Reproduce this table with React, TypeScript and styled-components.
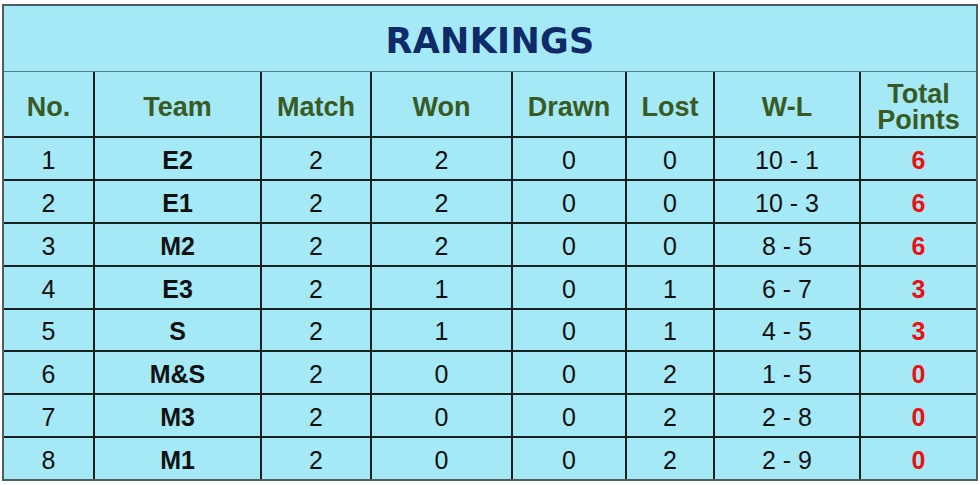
import React from "react";
import styled, { createGlobalStyle } from "styled-components";

const Global = createGlobalStyle`
  html, body { margin: 0; padding: 0; background: #ffffff; }
  body { font-family: "Liberation Sans", Arial, sans-serif; }
`;

const Frame = styled.div`
  margin: 4px 0 0 2px;
  width: 972px;
  border: 2px solid #4f5f61;
  background: #a4e9f5;
`;

const Title = styled.div`
  height: 66px;
  border-bottom: 1px solid #4d7f86;
  display: flex;
  align-items: center;
  justify-content: center;
  font-family: "DejaVu Sans", Verdana, sans-serif;
  font-weight: bold;
  font-size: 35px;
  letter-spacing: 0.3px;
  color: #0f2a68;
  padding-top: 4px;
  box-sizing: border-box;
`;

const Grid = styled.div`
  display: grid;
  grid-template-columns: 89px 167px 110px 141px 114px 88px 146px 117px;
  grid-template-rows: 64px repeat(8, 42.875px);
`;

const Cell = styled.div<{ $first?: boolean; $top?: boolean }>`
  box-sizing: border-box;
  display: flex;
  align-items: center;
  justify-content: center;
  text-align: center;
  border-left: ${(p) => (p.$first ? "none" : "2px solid #15201f")};
  border-top: ${(p) => (p.$top ? "none" : "2px solid #15201f")};
  font-size: 25px;
  color: #111111;
  padding-top: 4px;
`;

const HeadCell = styled(Cell)`
  font-size: 27px;
  font-weight: bold;
  line-height: 26px;
  color: #3a5a24;
  padding-top: 6px;
`;

const TotalLine = styled.span`
  display: block;
  line-height: 26px;
`;

const TeamCell = styled(Cell)`
  font-weight: bold;
`;

const PointsCell = styled(Cell)`
  font-weight: bold;
  color: #ec1010;
`;

const headers = ["No.", "Team", "Match", "Won", "Drawn", "Lost", "W-L"];

const rows: [number, string, number, number, number, number, string, number][] = [
  [1, "E2", 2, 2, 0, 0, "10 - 1", 6],
  [2, "E1", 2, 2, 0, 0, "10 - 3", 6],
  [3, "M2", 2, 2, 0, 0, "8 - 5", 6],
  [4, "E3", 2, 1, 0, 1, "6 - 7", 3],
  [5, "S", 2, 1, 0, 1, "4 - 5", 3],
  [6, "M&S", 2, 0, 0, 2, "1 - 5", 0],
  [7, "M3", 2, 0, 0, 2, "2 - 8", 0],
  [8, "M1", 2, 0, 0, 2, "2 - 9", 0],
];

export default function App() {
  return (
    <>
      <Global />
      <Frame>
        <Title>RANKINGS</Title>
        <Grid>
          {headers.map((h, i) => (
            <HeadCell key={h} $first={i === 0} $top>
              {h}
            </HeadCell>
          ))}
          <HeadCell $top>
            <div>
              <TotalLine>Total</TotalLine>
              <TotalLine>Points</TotalLine>
            </div>
          </HeadCell>
          {rows.map((r) => (
            <React.Fragment key={r[0]}>
              <Cell $first>{r[0]}</Cell>
              <TeamCell>{r[1]}</TeamCell>
              <Cell>{r[2]}</Cell>
              <Cell>{r[3]}</Cell>
              <Cell>{r[4]}</Cell>
              <Cell>{r[5]}</Cell>
              <Cell>{r[6]}</Cell>
              <PointsCell>{r[7]}</PointsCell>
            </React.Fragment>
          ))}
        </Grid>
      </Frame>
    </>
  );
}
